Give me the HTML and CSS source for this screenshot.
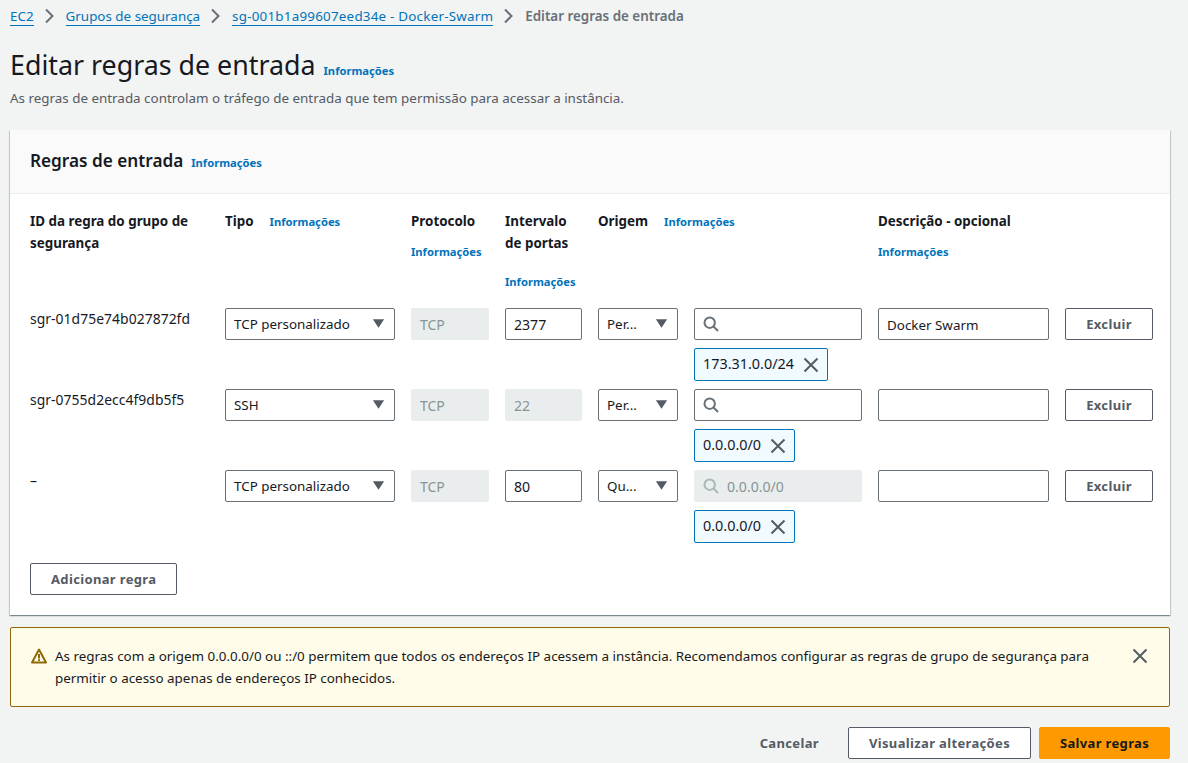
FILE: index.html
```html
<!DOCTYPE html>
<html lang="pt-BR">
<head>
<meta charset="utf-8">
<title>Editar regras de entrada</title>
<link rel="stylesheet" href="styles.css">
</head>
<body>
<svg class="defs" width="0" height="0" aria-hidden="true">
  <symbol id="chev" viewBox="0 0 16 16"><path d="M5 1.5 11.5 8 5 14.5" fill="none" stroke="currentColor" stroke-width="2"/></symbol>
  <symbol id="caret" viewBox="0 0 16 16"><path d="M2 3.5h12L8 12.5Z" fill="currentColor"/></symbol>
  <symbol id="search" viewBox="0 0 16 16"><circle cx="6.7" cy="6.7" r="5.2" fill="none" stroke="currentColor" stroke-width="2"/><path d="m10.5 10.5 4.5 4.5" fill="none" stroke="currentColor" stroke-width="2"/></symbol>
  <symbol id="close" viewBox="0 0 16 16"><path d="M1.5 1.5 14.5 14.5M14.5 1.5 1.5 14.5" fill="none" stroke="currentColor" stroke-width="2"/></symbol>
</svg>
<nav class="crumbs">
  <a class="crumb" href="#">EC2</a><svg class="chev"><use href="#chev"/></svg>
  <a class="crumb" href="#">Grupos de segurança</a><svg class="chev"><use href="#chev"/></svg>
  <a class="crumb crumb-id" href="#">sg-001b1a99607eed34e - Docker-Swarm</a><svg class="chev"><use href="#chev"/></svg>
  <span class="crumb-current">Editar regras de entrada</span>
</nav>
<header class="page-head">
  <h1>Editar regras de entrada</h1><a class="info" href="#">Informações</a>
</header>
<p class="page-desc">As regras de entrada controlam o tráfego de entrada que tem permissão para acessar a instância.</p>

<section class="panel">
  <div class="panel-head"><h2>Regras de entrada</h2><a class="info" href="#">Informações</a></div>
  <div class="rules">
    <div class="th">ID da regra do grupo de segurança</div>
    <div class="th th-inline">Tipo <a class="info" href="#">Informações</a></div>
    <div class="th">Protocolo<a class="info info-block" href="#">Informações</a></div>
    <div class="th">Intervalo de portas<a class="info info-block info-far" href="#">Informações</a></div>
    <div class="th th-inline th-wide">Origem <a class="info" href="#">Informações</a></div>
    <div class="th">Descrição - opcional<a class="info info-block" href="#">Informações</a></div>
    <div class="th"></div>

    <div class="rule-id">sgr-01d75e74b027872fd</div>
    <div class="select">TCP personalizado<svg class="caret"><use href="#caret"/></svg></div>
    <div class="field off">TCP</div>
    <div class="field num">2377</div>
    <div class="select">Per...<svg class="caret"><use href="#caret"/></svg></div>
    <div class="source">
      <div class="field search"><svg class="glass"><use href="#search"/></svg></div>
      <div class="token">173.31.0.0/24<svg class="x"><use href="#close"/></svg></div>
    </div>
    <div class="field">Docker Swarm</div>
    <button class="btn btn-del">Excluir</button>

    <div class="rule-id">sgr-0755d2ecc4f9db5f5</div>
    <div class="select">SSH<svg class="caret"><use href="#caret"/></svg></div>
    <div class="field off">TCP</div>
    <div class="field off num">22</div>
    <div class="select">Per...<svg class="caret"><use href="#caret"/></svg></div>
    <div class="source">
      <div class="field search"><svg class="glass"><use href="#search"/></svg></div>
      <div class="token">0.0.0.0/0<svg class="x"><use href="#close"/></svg></div>
    </div>
    <div class="field"></div>
    <button class="btn btn-del">Excluir</button>

    <div class="rule-id">–</div>
    <div class="select">TCP personalizado<svg class="caret"><use href="#caret"/></svg></div>
    <div class="field off">TCP</div>
    <div class="field num">80</div>
    <div class="select">Qu...<svg class="caret"><use href="#caret"/></svg></div>
    <div class="source">
      <div class="field search off num"><svg class="glass"><use href="#search"/></svg>0.0.0.0/0</div>
      <div class="token">0.0.0.0/0<svg class="x"><use href="#close"/></svg></div>
    </div>
    <div class="field"></div>
    <button class="btn btn-del">Excluir</button>
  </div>
  <div class="panel-foot"><button class="btn btn-add">Adicionar regra</button></div>
</section>

<aside class="alert">
  <svg class="warn" viewBox="0 0 16 16"><path d="M8 1.6 15 14.5H1Z" fill="none" stroke="currentColor" stroke-width="2" stroke-linejoin="round"/><path d="M7 6h2v4.4H7zM7 11.2h2v1.8H7z" fill="currentColor"/></svg>
  <p>As regras com a origem 0.0.0.0/0 ou ::/0 permitem que todos os endereços IP acessem a instância. Recomendamos configurar as regras de grupo de segurança para permitir o acesso apenas de endereços IP conhecidos.</p>
  <svg class="alert-x"><use href="#close"/></svg>
</aside>

<footer class="actions">
  <button class="btn btn-link">Cancelar</button>
  <button class="btn btn-view">Visualizar alterações</button>
  <button class="btn btn-save">Salvar regras</button>
</footer>
</body>
</html>
```
FILE: styles.css
```css
* { box-sizing: border-box; }
html, body { margin: 0; height: 763px; overflow: hidden; }
body {
  background: #f2f3f3;
  color: #16191f;
  font-family: "Noto Sans", "Liberation Sans", sans-serif;
  font-size: 13.4px;
  line-height: 22px;
  padding: 0 18px 0 10px;
}
.defs { position: absolute; }
a { color: #0073bb; text-decoration: none; }

.crumbs { display: flex; align-items: center; height: 32px; }
.crumb { border-bottom: 1px solid #0073bb; line-height: 17px; margin-top: 1px; }
.crumb-id { letter-spacing: .22px; }
.crumb-current { color: #687078; font-weight: 600; }
.chev { width: 16px; height: 16px; margin: 0 9px 0 7px; color: #687078; }

.page-head { display: flex; align-items: baseline; margin-top: 15px; height: 36px; }
h1 { margin: 0 8px 0 0; font-size: 26.8px; line-height: 36px; font-weight: 400; }
.info { font-size: 11.2px; font-weight: 700; line-height: 16px; }
.page-desc { margin: 4px 0 0; color: #545b64; line-height: 22px; height: 22px; }

.panel {
  margin-top: 21px;
  width: 1160px;
  height: 485px;
  background: #fff;
  box-shadow: 0 1px 1px 0 rgba(0, 28, 36, .3), 1px 1px 1px 0 rgba(0, 28, 36, .15), -1px 1px 1px 0 rgba(0, 28, 36, .15);
}
.panel-head {
  display: flex;
  align-items: baseline;
  height: 64px;
  padding: 19px 20px 0;
  background: #fafafa;
  border-bottom: 1px solid #eaeded;
}
h2 { margin: 0 8px 0 0; font-size: 17.2px; line-height: 24px; font-weight: 600; }

.rules {
  display: grid;
  grid-template-columns: 179px 170px 78px 77px 80px 168px 171px 88px;
  grid-template-rows: 98px repeat(3, 81px);
  column-gap: 16px;
  padding: 16px 17px 0 20px;
}
.th { font-weight: 700; font-size: 13.4px; }
.th-inline { display: flex; align-items: baseline; gap: 16px; }
.th-wide { grid-column: span 2; }
.info-block { display: block; margin-top: 12px; }
.info-far { margin-top: 20px; }

.rule-id { font-size: 13.9px; letter-spacing: .05px; }
.select, .field {
  display: flex;
  align-items: center;
  height: 32px;
  padding: 0 8px;
  background: #fff;
  border: 1px solid #687078;
  border-radius: 2px;
}
.field { padding-top: 2px; }
.select { position: relative; }
.caret { position: absolute; right: 8px; top: 7px; width: 15px; height: 15px; color: #545b64; }
.field.off { background: #eaeded; border-color: #eaeded; color: #879596; font-size: 14px; }
.field.num { font-size: 14.1px; }
.search { gap: 8px; }
.glass { width: 16px; height: 16px; flex: none; margin-top: -2px; color: #687078; }
.off .glass { color: #aab7b8; }
.source { display: flex; flex-direction: column; align-items: flex-start; }
.source .field { width: 100%; }
.token {
  display: flex;
  align-items: center;
  height: 33px;
  margin-top: 8px;
  padding: 0 8px 1px 8px;
  background: #f1faff;
  border: 1px solid #0073bb;
  border-radius: 2px;
  font-size: 14.4px;
}
.x { width: 16px; height: 16px; margin-left: 9px; margin-top: 1px; color: #545b64; }

.btn {
  height: 32px;
  padding: 0 20px;
  background: #fff;
  border: 1px solid #545b64;
  border-radius: 2px;
  color: #545b64;
  font: 700 13px/20px "Noto Sans", "Liberation Sans", sans-serif;
  letter-spacing: .35px;
}
.btn-del { padding: 0; }
.panel-foot { margin-top: 12px; padding-left: 20px; }

.alert {
  display: flex;
  align-items: flex-start;
  width: 1160px;
  height: 80px;
  margin-top: 12px;
  padding: 17px 21px 0 20px;
  background: #fffce9;
  border: 1px solid #906806;
  border-radius: 2px;
}
.alert p { margin: 0; width: 1046px; }
.warn { width: 16px; height: 16px; flex: none; margin: 3px 8px 0 0; color: #906806; }
.alert-x { width: 16px; height: 16px; flex: none; margin: 3px 0 0 auto; color: #545b64; }

.actions { display: flex; justify-content: flex-end; align-items: center; gap: 8px; width: 1160px; margin-top: 20px; }
.btn-link { background: none; border-color: transparent; }
.btn-view { width: 183px; padding: 0; }
.btn-save { width: 131px; padding: 0; background: #f90; border-color: #f90; color: #16191f; }
```
